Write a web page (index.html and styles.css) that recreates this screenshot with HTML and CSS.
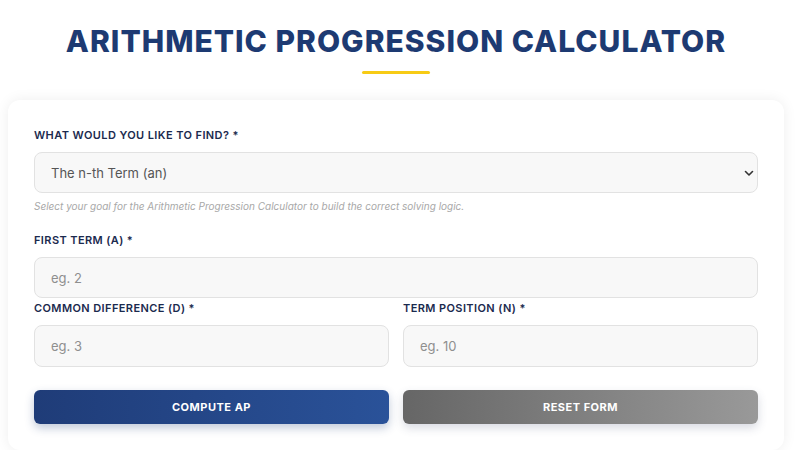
FILE: index.html
```html
<!DOCTYPE html>
<html lang="en">
<head>
<meta charset="utf-8">
<title>Arithmetic Progression Calculator</title>
<link rel="stylesheet" href="styles.css">
</head>
<body>
<div class="page">
  <header class="hero">
    <h1 class="title">ARITHMETIC PROGRESSION CALCULATOR</h1>
    <div class="underline"></div>
  </header>
  <form class="card">
    <div class="group group-goal">
      <label class="label" for="goal">WHAT WOULD YOU LIKE TO FIND? *</label>
      <div class="select-wrap">
        <select id="goal" class="field select">
          <option>The n-th Term (an)</option>
        </select>
        <svg class="chev" width="10" height="7" viewBox="0 0 10 7"><path d="M1.5 1.5 L5 5 L8.5 1.5" fill="none" stroke="#333" stroke-width="1.6" stroke-linecap="round" stroke-linejoin="round"/></svg>
      </div>
      <p class="help">Select your goal for the Arithmetic Progression Calculator to build the correct solving logic.</p>
    </div>
    <div class="group group-first">
      <label class="label" for="a">FIRST TERM (A) *</label>
      <input id="a" class="field" type="text" placeholder="eg. 2">
    </div>
    <div class="row">
      <div class="group">
        <label class="label" for="d">COMMON DIFFERENCE (D) *</label>
        <input id="d" class="field field-tall" type="text" placeholder="eg. 3">
      </div>
      <div class="group">
        <label class="label" for="n">TERM POSITION (N) *</label>
        <input id="n" class="field field-tall" type="text" placeholder="eg. 10">
      </div>
    </div>
    <div class="row buttons">
      <button type="button" class="btn btn-primary">COMPUTE AP</button>
      <button type="reset" class="btn btn-secondary">RESET FORM</button>
    </div>
  </form>
</div>
</body>
</html>
```
FILE: styles.css
```css
* { box-sizing: border-box; }
html, body { margin: 0; padding: 0; background: #ffffff; }
body {
  font-family: "Inter", "Open Sans", sans-serif;
  color: #1b2a4e;
}
.page {
  width: 776px;
  margin-left: 8px;
}
.hero {
  display: flex;
  flex-direction: column;
  align-items: center;
  padding-top: 23px;
}
.title {
  margin: 0;
  font-size: 30px;
  line-height: 37px;
  font-weight: 800;
  letter-spacing: 1px;
  color: #1d3a72;
}
.underline {
  width: 68px;
  height: 3px;
  background: #f7cb15;
  margin-top: 11px;
  border-radius: 2px;
}
.card {
  margin-top: 26px;
  background: #fff;
  border-radius: 12px;
  box-shadow: 0 0 14px rgba(0, 0, 0, 0.07);
  padding: 26px 26px 26px;
  display: flex;
  flex-direction: column;
}
.group {
  display: flex;
  flex-direction: column;
}
.group-goal { margin-bottom: 18px; }
.group-first { margin-bottom: 1px; }
.label {
  font-size: 11px;
  line-height: 18px;
  font-weight: 600;
  letter-spacing: 0.4px;
  color: #1b2a4e;
  margin-bottom: 8px;
}
.select-wrap {
  position: relative;
}
.field {
  width: 100%;
  height: 41px;
  border: 1px solid #e2e2e2;
  border-radius: 8px;
  background: #f8f8f8;
  font-family: inherit;
  font-size: 13px;
  color: #555;
  padding: 0 16px;
  outline: none;
}
.field-tall { height: 42px; }
.field::placeholder { color: #8f8f8f; }
.select {
  appearance: none;
  -webkit-appearance: none;
  color: #555;
}
.chev {
  position: absolute;
  right: 4px;
  top: 18px;
}
.help {
  margin: 6px 0 0;
  font-size: 10px;
  line-height: 14px;
  font-style: italic;
  color: #a8a8a8;
}
.row {
  display: grid;
  grid-template-columns: 1fr 1fr;
  gap: 14px;
}
.buttons {
  margin-top: 23px;
}
.btn {
  height: 34px;
  border: none;
  border-radius: 6px;
  font-family: inherit;
  font-size: 11px;
  font-weight: 700;
  letter-spacing: 0.5px;
  color: #fff;
}
.btn-primary {
  background: linear-gradient(90deg, #1f3c78 0%, #2a5299 100%);
  box-shadow: 0 4px 10px rgba(30, 60, 120, 0.28);
}
.btn-secondary {
  background: linear-gradient(90deg, #666666 0%, #999999 100%);
  box-shadow: 0 4px 10px rgba(60, 70, 110, 0.2);
}
```
